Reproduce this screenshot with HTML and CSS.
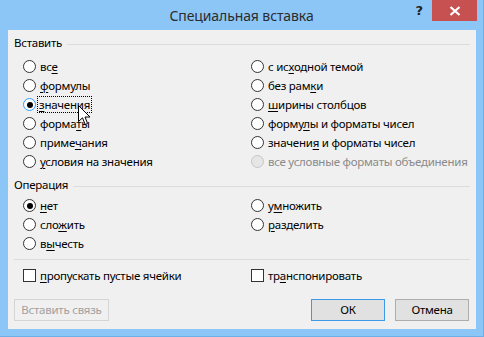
FILE: index.html
```html
<!DOCTYPE html>
<html lang="ru">
<head>
<meta charset="utf-8">
<link rel="stylesheet" href="styles.css">
</head>
<body>
<div class="window">
  <div class="titlebar">
    <div></div>
    <div class="title">Специальная вставка</div>
    <div class="controls">
      <span class="help">?</span>
      <span class="close"><svg width="12" height="10" viewBox="0 0 12 10"><path d="M1.5 1 L10.5 9 M10.5 1 L1.5 9" stroke="#fff" stroke-width="2.2" fill="none"/></svg></span>
    </div>
  </div>
  <div class="content">
    <div class="group-head"><span>Вставить</span><span class="line"></span></div>
    <div class="cols paste">
      <div class="col">
        <div class="row"><span class="radio"></span><span>вс<u>е</u></span></div>
        <div class="row"><span class="radio"></span><span><u>ф</u>ормулы</span></div>
        <div class="row"><span class="radio checked focus"></span><span class="focusbox"><u>з</u>начения</span></div>
        <div class="row"><span class="radio"></span><span>форма<u>т</u>ы</span></div>
        <div class="row"><span class="radio"></span><span>приме<u>ч</u>ания</span></div>
        <div class="row"><span class="radio"></span><span><u>у</u>словия на значения</span></div>
      </div>
      <div class="col">
        <div class="row"><span class="radio"></span><span>с ис<u>х</u>одной темой</span></div>
        <div class="row"><span class="radio"></span><span>без рам<u>к</u>и</span></div>
        <div class="row"><span class="radio"></span><span><u>ш</u>ирины столбцов</span></div>
        <div class="row"><span class="radio"></span><span>форму<u>л</u>ы и форматы чисел</span></div>
        <div class="row"><span class="radio"></span><span>значени<u>я</u> и форматы чисел</span></div>
        <div class="row disabled"><span class="radio"></span><span>все условные форматы объединения</span></div>
      </div>
    </div>
    <div class="group-head op-head"><span>Операция</span><span class="line"></span></div>
    <div class="cols ops">
      <div class="col">
        <div class="row"><span class="radio checked"></span><span><u>н</u>ет</span></div>
        <div class="row"><span class="radio"></span><span>сло<u>ж</u>ить</span></div>
        <div class="row"><span class="radio"></span><span>в<u>ы</u>честь</span></div>
      </div>
      <div class="col">
        <div class="row"><span class="radio"></span><span>у<u>м</u>ножить</span></div>
        <div class="row"><span class="radio"></span><span><u>р</u>азделить</span></div>
      </div>
    </div>
    <div class="sep"></div>
    <div class="cols checks">
      <div class="col">
        <div class="row"><span class="check"></span><span><u>п</u>ропускать пустые ячейки</span></div>
      </div>
      <div class="col">
        <div class="row"><span class="check"></span><span>тр<u>а</u>нспонировать</span></div>
      </div>
    </div>
    <div class="buttons">
      <span class="btn link">Вставить связь</span>
      <span class="spacer"></span>
      <span class="btn default">ОК</span>
      <span class="btn cancel">Отмена</span>
    </div>
  </div>
  <svg class="cursor" width="13" height="21" viewBox="0 0 13 21"><path d="M0.5 0.5 L0.5 16.5 L4.5 12.8 L7.2 19.5 L9.6 18.5 L7 12 L12 12 Z" fill="#fff" stroke="#000" stroke-width="1" stroke-linejoin="miter"/></svg>
</div>
</body>
</html>
```
FILE: styles.css
```css
* { box-sizing: border-box; }
html, body { margin: 0; padding: 0; }
body {
  font-family: "Noto Sans", "Open Sans", sans-serif;
  font-size: 11.5px;
  letter-spacing: -0.25px;
  color: #000;
  width: 484px;
  height: 337px;
  overflow: hidden;
}
.window {
  position: relative;
  width: 484px;
  height: 337px;
  background: #8cc6f7;
  border-right: 1px solid #6fafe8;
  border-bottom: 1px solid #6fafe8;
  display: flex;
  flex-direction: column;
}
.titlebar {
  height: 30px;
  display: grid;
  grid-template-columns: 1fr auto 1fr;
  align-items: start;
}
.title {
  font-size: 14px;
  letter-spacing: -0.1px;
  color: #2c2c2c;
  line-height: 30px;
  padding-top: 1px;
}
.controls {
  display: flex;
  justify-content: flex-end;
  align-items: flex-start;
  padding-right: 6px;
}
.help {
  font-family: "DejaVu Sans", sans-serif;
  font-weight: bold;
  font-size: 13px;
  color: #222;
  line-height: 21px;
  margin-right: 9px;
  letter-spacing: 0;
}
.close {
  width: 45px;
  height: 21px;
  background: #c75050;
  display: flex;
  align-items: center;
  justify-content: center;
}
.content {
  margin: 0 7px 0 8px;
  background: #f0f0f0;
  height: 299px;
  padding: 5px 6px 8px 6px;
  display: flex;
  flex-direction: column;
}
.group-head {
  height: 16px;
  display: flex;
  align-items: center;
  gap: 5px;
  line-height: 16px;
}
.group-head .line {
  flex: 1;
  border-top: 1px solid #dcdcdc;
  margin-top: 2px;
}
.cols {
  display: grid;
  grid-template-columns: 228px 1fr;
  padding-left: 9px;
}
.paste { margin-top: 6px; }
.op-head { margin-top: 6px; }
.ops { margin-top: 3px; }
.col { display: flex; flex-direction: column; }
.row {
  height: 19px;
  display: flex;
  align-items: center;
  white-space: nowrap;
  line-height: 15px;
}
.radio {
  width: 13px;
  height: 13px;
  border-radius: 50%;
  border: 1px solid #333;
  background: #fff;
  margin-right: 4px;
  flex: none;
  display: flex;
  align-items: center;
  justify-content: center;
}
.radio.checked::after {
  content: "";
  width: 6px;
  height: 6px;
  border-radius: 50%;
  background: #000;
}
.radio.focus { border-color: #3399ff; }
.focusbox {
  outline: 1px dotted #000;
  outline-offset: 0;
  padding: 0 1px;
  margin-left: -2px;
}
.row.disabled { color: #8a8a8a; }
.row.disabled .radio { border-color: #c6c6c6; background: #e6e6e6; }
u { text-decoration: underline; text-underline-offset: 2px; }
.sep {
  margin-top: 6px;
  border-top: 1px solid #dcdcdc;
}
.checks { margin-top: 6px; }
.check {
  width: 13px;
  height: 13px;
  border: 1px solid #333;
  background: #fff;
  margin-right: 4px;
  flex: none;
}
.buttons {
  margin-top: 14px;
  display: flex;
  height: 22px;
  padding-right: 1px;
}
.spacer { flex: 1; }
.btn {
  height: 22px;
  display: flex;
  align-items: center;
  justify-content: center;
  border: 1px solid #adadad;
  background: #e1e1e1;
  line-height: 20px;
}
.btn.link {
  width: 95px;
  border-color: #d5d5d5;
  background: #f0f0f0;
  color: #a0a0a0;
}
.btn.default {
  width: 74px;
  border-color: #3c9ae8;
}
.btn.cancel {
  width: 74px;
  margin-left: 10px;
}
.cursor {
  position: absolute;
  left: 78px;
  top: 105px;
}
```
